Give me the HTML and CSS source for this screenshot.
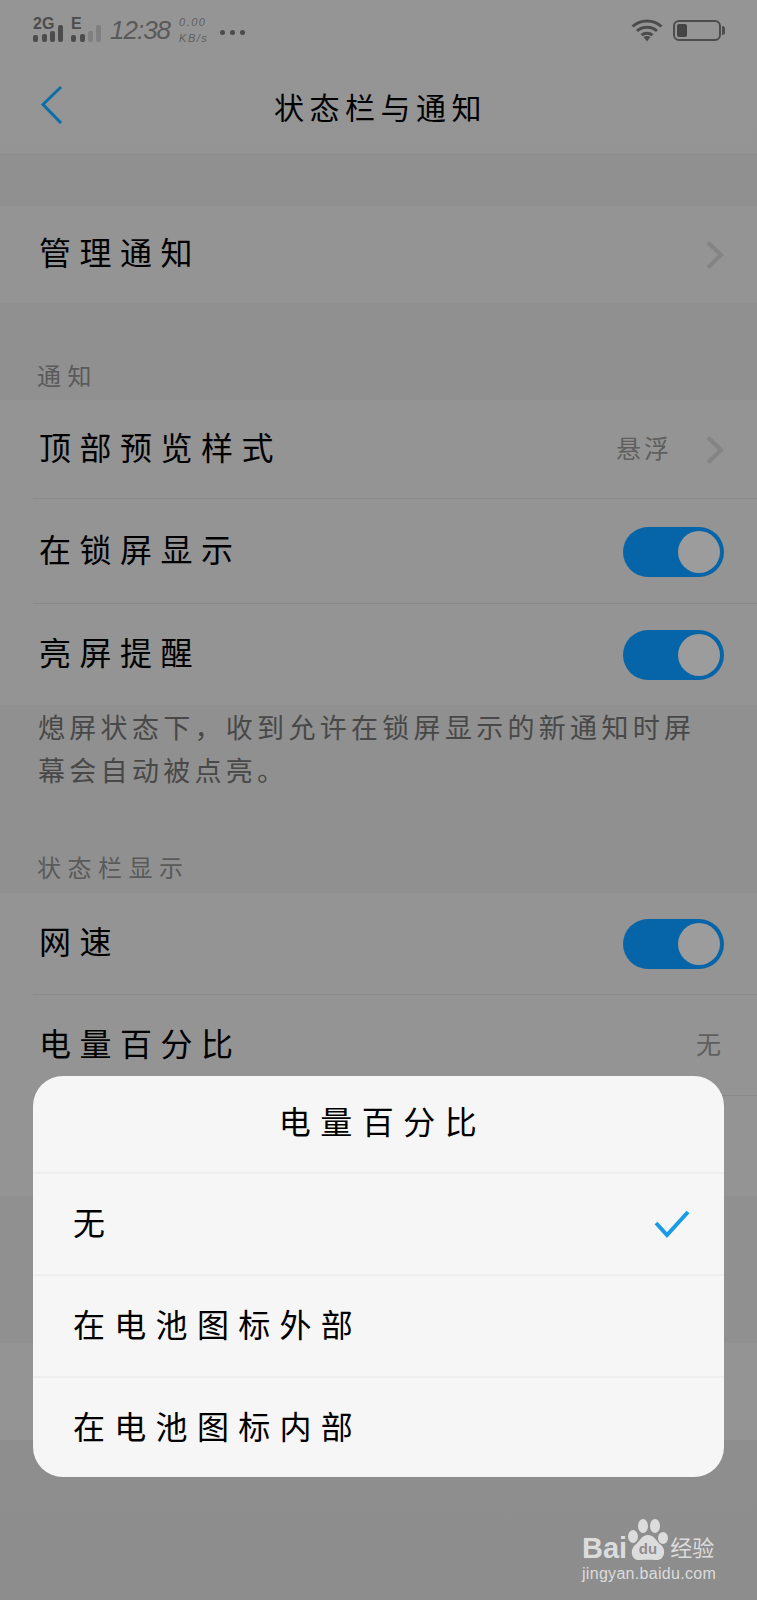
FILE: index.html
```html
<!DOCTYPE html>
<html lang="zh-CN">
<head>
    <meta charset="UTF-8">
    <meta name="viewport" content="width=device-width, initial-scale=1.0">
    <title>状态栏与通知</title>
    <link rel="stylesheet" href="styles.css">
</head>
<body>

<div class="page">
    <div class="status-bar">
        <svg class="signal" width="72" height="30" viewBox="0 -4 72 30">
            <text x="1" y="12" class="net-text">2G</text>
            <rect x="1" y="18" width="5" height="7" rx="2"/>
            <rect x="10" y="17" width="5" height="8" rx="2"/>
            <rect x="18" y="14" width="5" height="11" rx="2"/>
            <rect x="26" y="8" width="5" height="17" rx="2"/>
            <text x="39" y="12" class="net-text">E</text>
            <rect x="39" y="18" width="5" height="7" rx="2"/>
            <rect x="48" y="17" width="5" height="8" rx="2"/>
            <rect x="56" y="14" width="5" height="11" rx="2" class="dim"/>
            <rect x="64" y="8" width="5" height="17" rx="2" class="dim"/>
        </svg>
        <span class="clock">12:38</span>
        <span class="speed"><span>0.00</span><span>KB/s</span></span>
        <span class="dots">
            <i></i><i></i><i></i>
        </span>
        <span class="status-right">
            <svg width="32" height="24" viewBox="0 0 32 24" fill="none" stroke="#4c4c4c" stroke-width="3">
                <path d="M1.500 8.500C9.500 1 22.500 1 30.500 8.500"/>
                <path d="M6 13C11.500 8 20.500 8 26 13"/>
                <path d="M10.500 17.200C13.500 14.600 18.500 14.600 21.500 17.200"/>
                <path d="M12.500 19L16 23.500L19.500 19C17.200 17.800 14.800 17.800 12.500 19Z" fill="#4c4c4c" stroke="none"/>
            </svg>
            <span class="battery"><span class="battery-fill"></span></span>
        </span>
    </div>

    <header class="top-bar">
        <svg width="24" height="40" viewBox="0 0 24 40" fill="none" stroke="#0c6ea8" stroke-width="3">
            <path d="M21 2L3 19.500L21 38"/>
        </svg>
        <h1>状态栏与通知</h1>
    </header>

    <div class="gap gap-top"></div>

    <div class="row row-single">
        <span class="row-text">管理通知</span>
        <svg class="chevron" width="18" height="28" viewBox="0 0 18 28" fill="none" stroke="#848484" stroke-width="4">
            <path d="M2 1.500L15 14L2 26.500"/>
        </svg>
    </div>

    <div class="section-label label-first">通知</div>

    <div class="row">
        <span class="row-text">顶部预览样式</span>
        <span class="row-value">悬浮</span>
        <svg class="chevron" width="18" height="28" viewBox="0 0 18 28" fill="none" stroke="#848484" stroke-width="4">
            <path d="M2 1.500L15 14L2 26.500"/>
        </svg>
    </div>
    <div class="row row-tall">
        <span class="row-text">在锁屏显示</span>
        <span class="toggle"></span>
    </div>
    <div class="row row-last">
        <span class="row-text">亮屏提醒</span>
        <span class="toggle"></span>
    </div>

    <p class="note">熄屏状态下，收到允许在锁屏显示的新通知时屏幕会自动被点亮。</p>

    <div class="section-label label-second">状态栏显示</div>

    <div class="row row-speed">
        <span class="row-text">网速</span>
        <span class="toggle"></span>
    </div>
    <div class="row row-battery">
        <span class="row-text">电量百分比</span>
        <span class="row-value">无</span>
    </div>
    <div class="row row-last row-covered"></div>
    <div class="gap gap-bottom"></div>
    <div class="row row-single"></div>

    <div class="dialog">
        <div class="dialog-title">电量百分比</div>
        <div class="dialog-option">
            <span class="option-text">无</span>
            <svg width="36" height="28" viewBox="0 0 36 28" fill="none" stroke="#1a9be8" stroke-width="4">
                <path d="M2 13L13 25L34 2"/>
            </svg>
        </div>
        <div class="dialog-option"><span class="option-text">在电池图标外部</span></div>
        <div class="dialog-option"><span class="option-text">在电池图标内部</span></div>
    </div>

    <div class="watermark">
        <div class="wm-top">
            <span class="wm-bai">Bai</span>
            <svg class="wm-paw" width="40" height="42" viewBox="0 0 40 42" fill="#dcdcdc">
                <ellipse cx="5" cy="17.500" rx="5" ry="6.500"/>
                <ellipse cx="15" cy="7" rx="5" ry="7"/>
                <ellipse cx="27" cy="7" rx="5" ry="7"/>
                <ellipse cx="35" cy="19" rx="5" ry="6"/>
                <path d="M20 16C26 16 28 22 33 26C39 31 36 42 28 41C24 40.500 16 40.500 12 41C4 42 1 32 7 26C12 22 14 16 20 16Z"/>
                <text x="20" y="35" class="wm-du">du</text>
            </svg>
            <span class="wm-cn">经验</span>
        </div>
        <div class="wm-url">jingyan.baidu.com</div>
    </div>
</div>

</body>
</html>
```

FILE: styles.css
```css
body {
    margin: 0;
    font-family: "Noto Sans CJK SC", "Noto Sans", sans-serif;
    background-color: #8e8e8e;
}

.page {
    position: relative;
    width: 757px;
    height: 1600px;
    overflow: hidden;
    background: linear-gradient(to bottom, #959595, #8d8d8d);
}

/* status bar */
.status-bar {
    height: 56px;
    display: flex;
    align-items: center;
    padding: 4px 36px 0 32px;
    box-sizing: border-box;
    color: #4c4c4c;
}

.signal {
    margin-top: -4px;
    fill: #4c4c4c;
}

.signal .dim {
    fill: #7f7f7f;
}

.net-text {
    font-family: "Liberation Sans", sans-serif;
    font-size: 16px;
    font-weight: bold;
}

.clock {
    margin-left: 6px;
    font-family: "Liberation Sans", sans-serif;
    font-style: italic;
    font-size: 26px;
    letter-spacing: -1px;
    color: #5a5a5a;
}

.speed {
    display: flex;
    flex-direction: column;
    margin-left: 9px;
    font-family: "Liberation Sans", sans-serif;
    font-style: italic;
    font-size: 11px;
    line-height: 16px;
    letter-spacing: 1.500px;
    color: #606060;
}

.dots {
    display: flex;
    gap: 5px;
    margin-left: 12px;
    padding-top: 4px;
}

.dots i {
    width: 5px;
    height: 5px;
    border-radius: 50%;
    background-color: #4c4c4c;
}

.status-right {
    margin-left: auto;
    display: flex;
    align-items: center;
    gap: 10px;
}

.battery {
    position: relative;
    width: 48px;
    height: 21px;
    box-sizing: border-box;
    border: 2px solid #4c4c4c;
    border-radius: 6px;
    padding: 2px;
}

.battery::after {
    content: "";
    position: absolute;
    right: -6px;
    top: 4px;
    width: 3px;
    height: 9px;
    background-color: #4c4c4c;
    border-radius: 0 3px 3px 0;
}

.battery-fill {
    display: block;
    width: 10px;
    height: 100%;
    background-color: #454545;
    border-radius: 2px;
}

/* header */
.top-bar {
    height: 99px;
    display: grid;
    grid-template-columns: 1fr auto 1fr;
    align-items: center;
    padding: 0 40px;
    box-sizing: border-box;
    border-bottom: 1px solid #8c8c8c;
}

.top-bar h1 {
    margin: 0 0 -1px 4px;
    font-size: 30px;
    font-weight: normal;
    letter-spacing: 5.500px;
    color: #000;
}

/* rows */
.gap {
    background-color: #909090;
}

.gap-top {
    height: 51px;
}

.gap-bottom {
    height: 147px;
}

.row {
    height: 99px;
    display: flex;
    align-items: center;
    padding: 0 33px 0 39px;
    background-color: #949494;
    position: relative;
    box-sizing: border-box;
}

.row::after {
    content: "";
    position: absolute;
    left: 33px;
    right: 0;
    bottom: 0;
    height: 1px;
    background-color: #8a8a8a;
}

.row-tall {
    height: 105px;
}

.row-last {
    height: 101px;
}

.row-speed {
    height: 102px;
}

.row-battery {
    height: 101px;
}

.row-covered {
    height: 100px;
}

.row-single {
    height: 97px;
}

.row-last::after,
.row-single::after {
    display: none;
}

.row-text {
    padding-bottom: 8px;
    font-size: 32px;
    letter-spacing: 8.500px;
    color: #000;
}

.row-value {
    margin-left: auto;
    padding-bottom: 6px;
    font-size: 25px;
    letter-spacing: 3px;
    color: #5f5f5f;
}

.chevron {
    margin-left: auto;
    flex-shrink: 0;
}

.row-value + .chevron {
    margin-left: 34px;
}

.toggle {
    margin-left: auto;
    width: 101px;
    height: 50px;
    border-radius: 25px;
    background-color: #0565a8;
    display: flex;
    justify-content: flex-end;
    align-items: center;
    padding-right: 4px;
    box-sizing: border-box;
}

.toggle::after {
    content: "";
    width: 42px;
    height: 42px;
    border-radius: 50%;
    background-color: #9c9c9c;
}

/* section labels and note */
.section-label {
    display: flex;
    align-items: flex-end;
    padding-left: 37px;
    box-sizing: border-box;
    font-size: 24px;
    letter-spacing: 6.500px;
    color: #5a5a5a;
    background-color: #909090;
}

.label-first {
    height: 97px;
    padding-bottom: 8px;
}

.label-second {
    height: 73px;
    padding-bottom: 9px;
}

.note {
    margin: 0;
    height: 115px;
    box-sizing: border-box;
    padding: 0 33px 0 38px;
    font-size: 27px;
    line-height: 43px;
    letter-spacing: 4.300px;
    color: #484848;
    background-color: #909090;
}

/* dialog */
.dialog {
    position: absolute;
    left: 33px;
    top: 1076px;
    width: 691px;
    height: 401px;
    border-radius: 30px;
    background-color: #f6f6f6;
    overflow: hidden;
}

.dialog-title {
    height: 96px;
    display: flex;
    align-items: center;
    justify-content: center;
    padding: 0 0 8px 8px;
    box-sizing: border-box;
    font-size: 32px;
    letter-spacing: 9.500px;
    color: #000;
}

.dialog-option {
    height: 102px;
    display: flex;
    align-items: center;
    justify-content: space-between;
    padding: 0 34px 0 40px;
    box-sizing: border-box;
    border-top: 2px solid #eeeeee;
    font-size: 32px;
    letter-spacing: 9.300px;
    color: #000;
}

.option-text {
    padding-bottom: 6px;
}

/* watermark */
.watermark {
    position: absolute;
    left: 582px;
    top: 1519px;
    color: #dcdcdc;
}

.wm-top {
    display: flex;
    align-items: flex-end;
    height: 42px;
}

.wm-bai {
    margin-bottom: -4px;
    font-family: "Liberation Sans", sans-serif;
    font-size: 29px;
    line-height: 34px;
    font-weight: bold;
}

.wm-paw {
    margin-left: 1px;
}

.wm-du {
    font-family: "Liberation Sans", sans-serif;
    font-size: 15px;
    font-weight: bold;
    text-anchor: middle;
    fill: #8e8e8e;
}

.wm-cn {
    margin-bottom: -1px;
    margin-left: 2px;
    font-size: 22px;
    line-height: 32px;
}

.wm-url {
    margin-top: 3px;
    font-family: "Liberation Sans", sans-serif;
    font-size: 16px;
    line-height: 20px;
    letter-spacing: 0.300px;
    white-space: nowrap;
}
```
